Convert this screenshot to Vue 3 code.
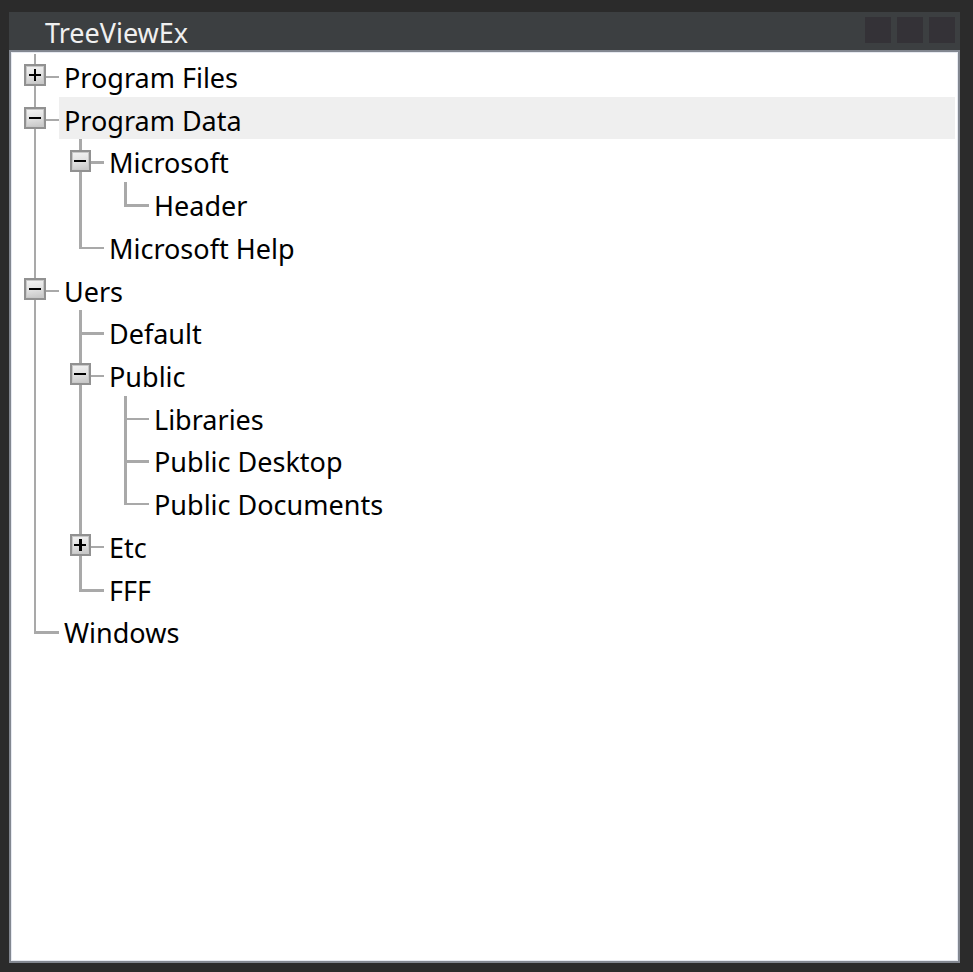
<script setup>
import { computed, ref } from 'vue'

const tree = ref([
  { label: 'Program Files', expanded: false },
  {
    label: 'Program Data',
    expanded: true,
    children: [
      { label: 'Microsoft', expanded: true, children: [{ label: 'Header' }] },
      { label: 'Microsoft Help' },
    ],
  },
  {
    label: 'Uers',
    expanded: true,
    children: [
      { label: 'Default' },
      {
        label: 'Public',
        expanded: true,
        children: [
          { label: 'Libraries' },
          { label: 'Public Desktop' },
          { label: 'Public Documents' },
        ],
      },
      { label: 'Etc', expanded: false },
      { label: 'FFF' },
    ],
  },
  { label: 'Windows' },
])

const selected = ref('Program Data')

// Flattens the visible nodes; each row carries the guide cells drawn before its label.
function flatten(nodes, ancestors) {
  return nodes.flatMap((node, i) => {
    const last = i === nodes.length - 1
    const row = { node, guides: [...ancestors, last ? 'elbow' : 'tee'] }
    const below = node.expanded && node.children
      ? flatten(node.children, [...ancestors, last ? 'blank' : 'pipe'])
      : []
    return [row, ...below]
  })
}

const rows = computed(() => flatten(tree.value, []))

// Nested signs have a heavier upright, in step with the heavier nested guide lines.
function signPath(expanded, nested) {
  const bar = 'M0 5h12v2H0z'
  if (expanded) return bar
  return bar + (nested ? 'M5 0h3v12H5z' : 'M5 0h2v12H5z')
}
</script>

<template>
  <div class="desktop">
    <main class="window">
      <header class="titlebar">
        <h1 class="title">TreeViewEx</h1>
        <div class="controls">
          <button type="button" class="control" aria-label="Minimize"></button>
          <button type="button" class="control" aria-label="Maximize"></button>
          <button type="button" class="control" aria-label="Close"></button>
        </div>
      </header>
      <section class="panel">
        <ul class="tree" role="tree">
          <li
            v-for="row in rows"
            :key="row.node.label"
            class="row"
            role="treeitem"
            :aria-level="row.guides.length"
            :aria-selected="row.node.label === selected"
          >
            <span v-for="(g, i) in row.guides" :key="i" class="cell" :class="[g, { nested: i > 0 }]">
              <button
                v-if="i === row.guides.length - 1 && row.node.expanded !== undefined"
                type="button"
                class="toggle"
                :aria-label="row.node.label"
                :aria-expanded="row.node.expanded"
                @click="row.node.expanded = !row.node.expanded"
              >
                <svg class="sign" viewBox="0 0 12 12" shape-rendering="crispEdges" aria-hidden="true">
                  <path :d="signPath(row.node.expanded, i > 0)" />
                </svg>
              </button>
            </span>
            <span
              class="label"
              :class="{ selected: row.node.label === selected }"
              @click="selected = row.node.label"
            >{{ row.node.label }}</span>
          </li>
        </ul>
      </section>
    </main>
  </div>
</template>

<style>
body {
  margin: 0;
  background: #2b2b2b;
}
</style>

<style scoped>
.desktop {
  box-sizing: border-box;
  display: flex;
  min-height: 100vh;
  padding: 12px 13px 9px 9px;
  background: #2b2b2b;
  font-family: "Noto Sans", "Open Sans", sans-serif;
  font-size: 27px;
  line-height: 36px;
}
.window {
  display: flex;
  flex: 1;
  flex-direction: column;
  min-width: 0;
}
.titlebar {
  display: flex;
  align-items: flex-start;
  justify-content: space-between;
  height: 38px;
  padding: 0 5px 0 36px;
  background: #3c3f41;
}
.title {
  margin: 0;
  padding-top: 3px;
  color: #f0f0f0;
  font-size: inherit;
  font-weight: 400;
}
.controls {
  display: flex;
  gap: 6px;
  padding-top: 5px;
}
.control {
  width: 26px;
  height: 26px;
  padding: 0;
  border: 0;
  background: #343237;
}
.panel {
  flex: 1;
  padding: 2px 2px 0;
  border: 2px solid #828790;
  background: #fff;
  box-shadow: inset 0 0 0 1px #e6e9f0;
}
.tree {
  display: grid;
  grid-template-rows: repeat(14, 1fr);
  height: 598px;
  margin: 0;
  padding: 0 1px;
  list-style: none;
}
.row {
  --stroke: 2px;
  display: flex;
  min-height: 0;
}
.row:nth-child(3n + 4),
.row:nth-child(3),
.row:nth-child(14) {
  --stroke: 3px;
}
.cell {
  --pipe: 2px;
  display: flex;
  flex: none;
  align-items: center;
  box-sizing: border-box;
  width: 45px;
  padding-left: 10px;
  background-repeat: no-repeat;
}
.cell.nested {
  --pipe: 3px;
  padding-left: 11px;
}
.pipe {
  background-image: linear-gradient(#a9a9a9, #a9a9a9);
  background-position: 20px 0;
  background-size: var(--pipe) 100%;
}
.tee,
.elbow {
  background-image: linear-gradient(#a9a9a9, #a9a9a9), linear-gradient(#a9a9a9, #a9a9a9);
  background-position: 20px 0, 20px 22px;
  background-size: var(--pipe) 100%, 25px var(--stroke);
}
.elbow {
  background-size: var(--pipe) 22px, 25px var(--stroke);
}
.toggle {
  box-sizing: border-box;
  display: flex;
  align-items: center;
  justify-content: flex-start;
  width: 22px;
  height: 22px;
  padding: 0 0 0 3px;
  border: 2px solid #919191;
  background: linear-gradient(170deg, #f4f4f4, #e2e2e2 50%, #c4c4c4);
  box-shadow: inset 0 0 0 1px #c8c8c8;
}
.nested .toggle {
  width: 21px;
  padding-left: 2px;
}
.sign {
  width: 12px;
  height: 12px;
  fill: #000;
}
.label {
  flex: 1;
  padding: 6px 5px 0;
  color: #000;
  white-space: nowrap;
  cursor: default;
}
.label.selected {
  background: #efefef;
}
</style>
